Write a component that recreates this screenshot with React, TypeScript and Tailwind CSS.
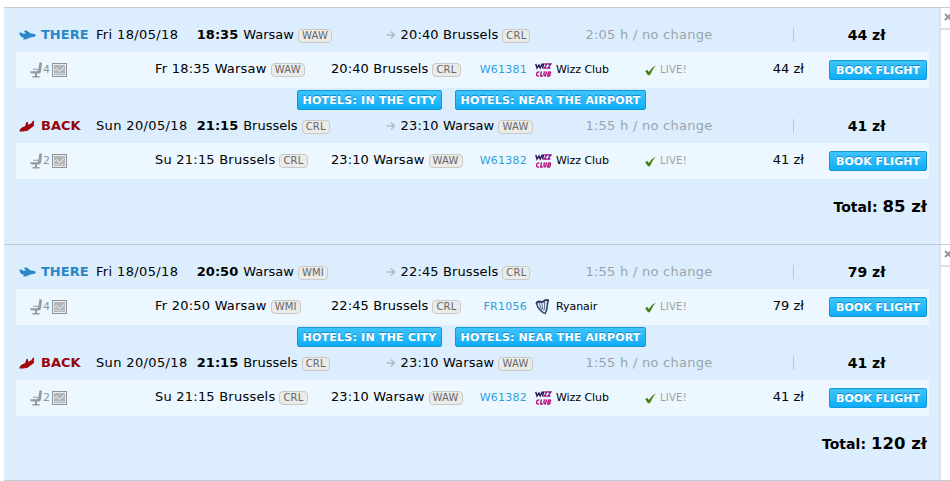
import { clsx } from "clsx"

type Leg = {
  kind: "THERE" | "BACK"
  date: string
  day: string
  depart: string
  from: string
  fromCode: string
  arrive: string
  to: string
  toCode: string
  duration: string
  price: string
  seats: string
  flight: string
  airline: "Wizz Club" | "Ryanair"
}

const brusselsBack: Leg = {
  kind: "BACK",
  date: "Sun 20/05/18",
  day: "Su",
  depart: "21:15",
  from: "Brussels",
  fromCode: "CRL",
  arrive: "23:10",
  to: "Warsaw",
  toCode: "WAW",
  duration: "1:55 h / no change",
  price: "41 zł",
  seats: "2",
  flight: "W61382",
  airline: "Wizz Club",
}

const trips: { total: string; legs: Leg[] }[] = [
  {
    total: "85 zł",
    legs: [
      {
        kind: "THERE",
        date: "Fri 18/05/18",
        day: "Fr",
        depart: "18:35",
        from: "Warsaw",
        fromCode: "WAW",
        arrive: "20:40",
        to: "Brussels",
        toCode: "CRL",
        duration: "2:05 h / no change",
        price: "44 zł",
        seats: "4",
        flight: "W61381",
        airline: "Wizz Club",
      },
      brusselsBack,
    ],
  },
  {
    total: "120 zł",
    legs: [
      {
        kind: "THERE",
        date: "Fri 18/05/18",
        day: "Fr",
        depart: "20:50",
        from: "Warsaw",
        fromCode: "WMI",
        arrive: "22:45",
        to: "Brussels",
        toCode: "CRL",
        duration: "1:55 h / no change",
        price: "79 zł",
        seats: "4",
        flight: "FR1056",
        airline: "Ryanair",
      },
      brusselsBack,
    ],
  },
]

function Plane({ back }: { back: boolean }) {
  return back ? (
    <svg width="17" height="14" viewBox="0 0 17 14" className="shrink-0" fill="#a3080f">
      <path d="M0.3 12.4 Q0.6 9.6 3 8.6 L6.2 7 L7.2 3.4 Q8.6 2 9 3.8 L9.2 5.8 L12 4.4 L14 1.8 L15.2 2 L14.8 4.8 Q16.2 6.4 14 7.8 L11.4 9.4 L8.6 11.8 L5.8 12.2 Q3 12.8 0.3 12.4 Z" />
    </svg>
  ) : (
    <svg width="18" height="14" viewBox="0 0 18 14" className="shrink-0" fill="#2b86c5">
      <path d="M0.2 4.8 L2 4.4 L4.4 5.8 L7 5.6 L5 3.4 Q5.8 2 7.6 2.6 L11.8 5.6 Q15 5.6 16.6 6.8 Q17.4 8 15.6 8.8 L11.2 9.6 L7.4 11.2 L4 11.4 L5 10 Q2 9.4 1.2 7.6 Z" />
    </svg>
  )
}

function Seat() {
  return (
    <svg width="13" height="16" viewBox="0 0 13 16" className="shrink-0" fill="#96999e">
      <path d="M9.4 0.4 H12 L11.2 8.6 Q11 11.4 8.6 11.6 H1.4 Q0 11.2 0.3 9.2 H6.8 Q8.2 8.8 8.4 7.4 Z" />
      <path d="M3 6.8 H8.6 V7.8 H3 Z M5 11 H7 V14 H9.6 V15.4 H2.4 V14 H5 Z" />
    </svg>
  )
}

function PriceChart() {
  return (
    <svg width="15" height="14" viewBox="0 0 15 14" className="ml-0.5 shrink-0">
      <rect x="0.5" y="0.5" width="14" height="13" fill="#e9edf0" stroke="#8f9397" />
      <rect x="2" y="2" width="11" height="10" fill="#b3b7ba" />
      <path d="M2.5 7.5 L4.5 5.5 L7.5 8.5 L12 4.5" fill="none" stroke="#f1f4f6" strokeWidth="1" />
      <path d="M3 10.5 H12" fill="none" stroke="#dde1e3" strokeDasharray="2 1" />
    </svg>
  )
}

function WizzLogo() {
  return (
    <svg width="17" height="16" viewBox="0 0 17 16" className="shrink-0" fill="none">
      <path d="M0.8 2 L2 6 L4 3 L5.2 6 L7.4 1.6 M8.6 1.4 L7.6 6.4" stroke="#32195f" strokeWidth="1.5" />
      <path d="M9.4 2 H12 L9.2 6 H11.6 M12.8 2 H16 L12.8 6 H15.4" stroke="#8f1784" strokeWidth="1.3" />
      <path
        d="M4.4 10.1 Q2 9.5 1.6 12 Q1.4 14.6 4 13.8 M6.4 9.3 L5.7 14 H7.8 M9.4 9.3 L8.9 12.6 Q9 14.3 10.6 13.6 L11.5 9.3 M13.4 9.9 L12.8 14 H14.2 Q15.8 13.2 14.7 11.9 Q16.4 10.3 14.8 9.9 H13.4 M13.4 11.9 H14.7"
        stroke="#b8127a"
        strokeWidth="1.4"
      />
    </svg>
  )
}

function RyanairLogo() {
  return (
    <svg width="17" height="16" viewBox="0 0 17 16" className="shrink-0" fill="none">
      <path d="M1.2 4.6 Q2.4 2 5 2.8 Q8 3.4 9.6 1.6 Q11.4 0.6 13.8 1.4" stroke="#26395f" strokeWidth="2" />
      <path d="M13.6 1.4 Q12 4 12.2 7 Q12.4 11 9.8 15" stroke="#26395f" strokeWidth="1.5" />
      <path d="M1.5 4 Q2.6 10.5 9.8 14.6" stroke="#3a4e75" strokeWidth="1.5" />
      <path d="M4.4 4 Q4.8 7.5 6.6 10.4 M7 4 Q7 8 8.4 11.4 M9.6 3 V11" stroke="#5b6f92" strokeWidth="1.1" />
    </svg>
  )
}

function Code({ children }: { children: string }) {
  return (
    <span className="relative top-px ml-1 inline-flex h-[14px] items-center rounded-[4px] border border-[#c9c9c6] bg-[#ebebe9] px-[3px] text-[10px] leading-none tracking-[0.2px] text-[#666]">
      {children}
    </span>
  )
}

function Button({ children, className }: { children: string; className: string }) {
  return (
    <button
      className={clsx(
        "flex h-5 shrink-0 items-center justify-center rounded-[2px] border border-[#1597d3] bg-linear-to-b from-[#3cc4fc] to-[#08adf8] text-[11px] leading-none font-bold whitespace-nowrap text-white [text-shadow:0_-1px_0_#168ac4]",
        className,
      )}
    >
      {children}
    </button>
  )
}

function LegHeader({ leg }: { leg: Leg }) {
  const back = leg.kind === "BACK"
  return (
    <div className={clsx("flex items-center pl-[3px]", back ? "h-[33px] pb-0.5" : "h-11 pt-[9px]")}>
      <div className={clsx("flex w-[77px] items-center gap-1 font-bold", back ? "text-[#95040b]" : "text-[#2b86c5]")}>
        <div className="flex w-[18px]">
          <Plane back={back} />
        </div>
        {leg.kind}
      </div>
      <div className="w-[101px] tracking-[0.37px]">{leg.date}</div>
      <div className="flex w-[189px] items-center">
        <b className="mr-[5px]">{leg.depart}</b>
        {leg.from}
        <Code>{leg.fromCode}</Code>
      </div>
      <svg width="10" height="10" viewBox="0 0 10 10" className="mr-[5px]" fill="none" stroke="#b0bcc6" strokeWidth="1.5">
        <path d="M0.5 5 H8.5 M5 1.5 L8.5 5 L5 8.5" />
      </svg>
      <div className="flex w-[185px] items-center tracking-[0.12px]">
        {leg.arrive} {leg.to}
        <Code>{leg.toCode}</Code>
      </div>
      <div className="w-[208px] tracking-[0.26px] text-[#9ba4ac]">{leg.duration}</div>
      <div className="h-3.5 w-px bg-[#bdc9d2]" />
      <div className="w-[145px] text-center text-[14px] font-bold">{leg.price}</div>
    </div>
  )
}

function LegDetails({ leg }: { leg: Leg }) {
  return (
    <div className="mr-[10px] flex h-9 items-center bg-[#ecf7ff] pb-0.5 pl-[14px]">
      <div className="flex w-[125px] items-center pt-0.5">
        <Seat />
        <span className="w-[7px] pb-0.5 text-[11px] leading-none text-[#90969b]">{leg.seats}</span>
        <PriceChart />
      </div>
      <div className="flex w-44 items-center tracking-[0.22px]">
        {leg.day} {leg.depart} {leg.from}
        <Code>{leg.fromCode}</Code>
      </div>
      <div className="flex w-[135px] items-center tracking-[0.1px]">
        {leg.arrive} {leg.to}
        <Code>{leg.toCode}</Code>
      </div>
      <div className="w-[61px] pt-px text-right text-[11px] tracking-[0.25px] text-[#2f9fdc]">{leg.flight}</div>
      <div className="ml-2 flex w-[110px] items-center gap-1 pt-px text-[11px] tracking-[-0.05px]">
        {leg.airline === "Ryanair" ? <RyanairLogo /> : <WizzLogo />}
        {leg.airline}
      </div>
      <div className="flex w-[87px] items-center gap-1 pt-0.5 text-[10px] tracking-[0.25px] text-[#9aa2a8]">
        <svg width="11" height="11" viewBox="0 0 11 11" fill="#498012">
          <path d="M0.2 6.2 L2.2 4.8 L3.8 7 Q6.5 2.5 10.6 0.4 Q7.4 4.5 4.9 10.3 H3 Z" />
        </svg>
        LIVE!
      </div>
      <div className="w-[72px] text-right text-[13px]">{leg.price}</div>
      <Button className="relative top-px ml-[25px] w-[98px]">BOOK FLIGHT</Button>
    </div>
  )
}

function CloseTab() {
  return (
    <div className="h-[22px] w-[10px] overflow-hidden border-b-2 border-[#dedede] bg-white pt-[5px] pl-[3px]">
      <svg width="9" height="9" viewBox="0 0 9 9" stroke="#929aa1" strokeWidth="2">
        <path d="M1 1 L7 7 M7 1 L1 7" />
      </svg>
    </div>
  )
}

export default function App() {
  return (
    <div className="h-[481px] w-[950px] overflow-hidden bg-white pt-[7px] pl-1 font-['Verdana','DejaVu_Sans',sans-serif] text-[13px] leading-4 whitespace-nowrap text-black">
      {trips.map((trip, i) => (
        <section key={trip.total} className={clsx("flex border-t border-[#c0ccd6]", i === 0 ? "h-[237px]" : "h-[236px]")}>
          <div className="w-[937px] shrink-0 border-r-2 border-[#d9e3ea] bg-[#dceefd] pl-3">
            <LegHeader leg={trip.legs[0]} />
            <LegDetails leg={trip.legs[0]} />
            <div className="flex h-[22px] gap-[13px] pt-0.5 pl-[281px]">
              <Button className="w-[145px] tracking-[0.23px]">HOTELS: IN THE CITY</Button>
              <Button className="w-[191px] tracking-[0.15px]">HOTELS: NEAR THE AIRPORT</Button>
            </div>
            <LegHeader leg={trip.legs[1]} />
            <LegDetails leg={trip.legs[1]} />
            <div className="flex h-14 items-center justify-end gap-[5px] pr-3 font-bold">
              <span className="text-[14px] tracking-[0.05px]">Total:</span>
              <span className="text-[16.5px]">{trip.total}</span>
            </div>
          </div>
          <CloseTab />
        </section>
      ))}
      <div className="h-px bg-[#c0ccd6]" />
    </div>
  )
}
